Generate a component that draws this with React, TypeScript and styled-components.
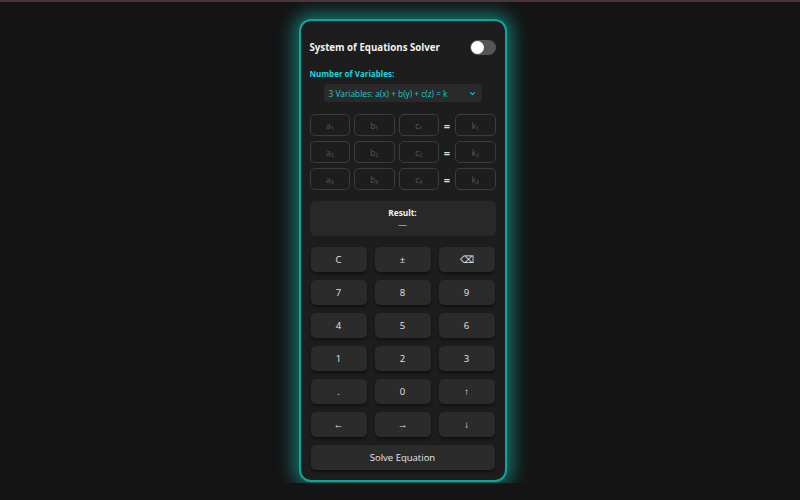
import * as React from 'react'
import styled, { createGlobalStyle } from 'styled-components'

const GlobalStyle = createGlobalStyle`
  html, body {
    margin: 0;
    padding: 0;
    background: #141414;
  }
  body {
    border-top: 2px solid #4b3539;
    font-family: 'Open Sans', 'Noto Sans', sans-serif;
    color: #eee;
  }
`

const Page = styled.div`
  display: flex;
  justify-content: center;
  padding: 17px 0 0 5px;
  height: 481px;
  box-sizing: border-box;
`

const Card = styled.div`
  width: 208px;
  height: 463px;
  box-sizing: border-box;
  padding: 15px 9px 10px 9px;
  background: #1d1d1d;
  border: 2px solid #12a39a;
  border-radius: 12px;
  box-shadow: 0 0 18px 5px rgba(20, 200, 190, 0.55);
  display: flex;
  flex-direction: column;
`

const Header = styled.div`
  display: flex;
  align-items: center;
  justify-content: space-between;
  height: 24px;
`

const Title = styled.h1`
  margin: 0;
  font-size: 9.7px;
  font-weight: 700;
  color: #f2f2f2;
`

const Toggle = styled.div`
  width: 26px;
  height: 15px;
  border-radius: 8px;
  background: #555;
  position: relative;

  &::after {
    content: '';
    position: absolute;
    left: 1px;
    top: 1px;
    width: 13px;
    height: 13px;
    border-radius: 50%;
    background: #fff;
  }
`

const Label = styled.div`
  margin-top: 8px;
  font-size: 8px;
  font-weight: 700;
  color: #19d6e6;
`

const SelectBox = styled.div`
  margin: 5px auto 0;
  width: 158px;
  height: 19px;
  box-sizing: border-box;
  padding: 0 6px 0 5px;
  background: #2a2a2a;
  border-radius: 4px;
  display: flex;
  align-items: center;
  justify-content: space-between;
  font-size: 8.3px;
  color: #19c9d9;
`

const Chevron = styled.svg`
  width: 7px;
  height: 7px;
`

const Grid = styled.div`
  margin-top: 12px;
  display: grid;
  grid-template-columns: 1fr 1fr 1fr 8px 1fr;
  column-gap: 4px;
  row-gap: 5px;
`

const Cell = styled.div`
  height: 22px;
  box-sizing: border-box;
  border: 1px solid #3c3c3c;
  border-radius: 5px;
  display: flex;
  align-items: center;
  justify-content: center;
  font-size: 8.5px;
  color: #585858;
`

const Eq = styled.div`
  display: flex;
  align-items: center;
  justify-content: center;
  font-size: 11px;
  font-weight: 700;
  color: #ddd;
`

const Result = styled.div`
  margin-top: 11px;
  height: 35px;
  border-radius: 6px;
  background: #282828;
  display: flex;
  flex-direction: column;
  align-items: center;
  justify-content: center;
  gap: 1px;
`

const ResultLabel = styled.div`
  font-size: 8.3px;
  font-weight: 700;
  color: #f2f2f2;
`

const ResultValue = styled.div`
  font-size: 9px;
  color: #ddd;
  line-height: 11px;
`

const Keypad = styled.div`
  margin-top: 11px;
  padding: 0 1px;
  display: grid;
  grid-template-columns: repeat(3, 1fr);
  column-gap: 8px;
  row-gap: 8px;
`

const Key = styled.button<{ $wide?: boolean }>`
  grid-column: ${p => (p.$wide ? '1 / -1' : 'auto')};
  height: 25px;
  border: none;
  border-radius: 5px;
  background: #2b2b2b;
  box-shadow: 0 2px 3px rgba(0, 0, 0, 0.45);
  color: #e6e6e6;
  font-family: 'Open Sans', 'Noto Sans', sans-serif;
  font-size: 9.5px;
  padding: 0;
`

const sub = ['₁', '₂', '₃']
const keys = ['C', '±', '⌫', '7', '8', '9', '4', '5', '6', '1', '2', '3', '.', '0', '↑', '←', '→', '↓']

export default function App() {
  return (
    <>
      <GlobalStyle />
      <Page>
        <Card>
          <Header>
            <Title>System of Equations Solver</Title>
            <Toggle />
          </Header>
          <Label>Number of Variables:</Label>
          <SelectBox>
            <span>3 Variables: a(x) + b(y) + c(z) = k</span>
            <Chevron viewBox="0 0 10 10">
              <path d="M2 3.5 L5 6.5 L8 3.5" fill="none" stroke="#19c9d9" strokeWidth="1.6" />
            </Chevron>
          </SelectBox>
          <Grid>
            {sub.map(s => (
              <React.Fragment key={s}>
                <Cell>a{s}</Cell>
                <Cell>b{s}</Cell>
                <Cell>c{s}</Cell>
                <Eq>=</Eq>
                <Cell>k{s}</Cell>
              </React.Fragment>
            ))}
          </Grid>
          <Result>
            <ResultLabel>Result:</ResultLabel>
            <ResultValue>—</ResultValue>
          </Result>
          <Keypad>
            {keys.map(k => (
              <Key key={k}>{k}</Key>
            ))}
            <Key $wide>Solve Equation</Key>
          </Keypad>
        </Card>
      </Page>
    </>
  )
}
